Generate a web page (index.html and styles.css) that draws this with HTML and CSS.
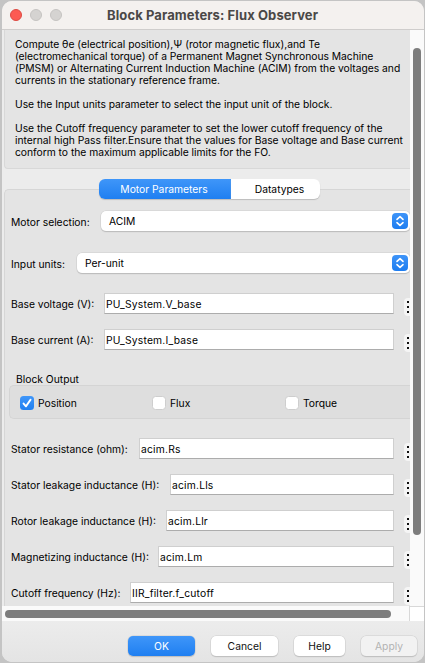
FILE: index.html
```html
<!DOCTYPE html>
<html lang="en">
<head>
<meta charset="utf-8">
<title>Block Parameters: Flux Observer</title>
<link rel="stylesheet" href="styles.css">
</head>
<body>
<main class="window">
  <header class="titlebar">
    <span class="light light-close"></span><span class="light"></span><span class="light"></span>
    <h1>Block Parameters: Flux Observer</h1>
  </header>
  <div class="viewport">
    <div class="content">
      <section class="description">
        <p><span>Compute θe (electrical position),Ψ (rotor magnetic flux),and Te</span><span>(electromechanical torque) of a Permanent Magnet Synchronous Machine</span><span>(PMSM) or Alternating Current Induction Machine (ACIM) from the voltages and</span><span>currents in the stationary reference frame.</span></p>
        <p><span>Use the Input units parameter to select the input unit of the block.</span></p>
        <p><span>Use the Cutoff frequency parameter to set the lower cutoff frequency of the</span><span>internal high Pass filter.Ensure that the values for Base voltage and Base current</span><span>conform to the maximum applicable limits for the FO.</span></p>
      </section>
      <nav class="tabs"><span class="tab tab-active">Motor Parameters</span><span class="tab tab-last">Datatypes</span></nav>
      <section class="panel">
        <div class="row row-select"><label class="w-motor">Motor selection:</label><div class="select">ACIM<svg viewBox="0 0 16 16"><path d="M5 6.4 8 3.6l3 2.8M5 9.6l3 2.8 3-2.8"/></svg></div></div>
        <div class="row row-select"><label class="w-units">Input units:</label><div class="select">Per-unit<svg viewBox="0 0 16 16"><path d="M5 6.4 8 3.6l3 2.8M5 9.6l3 2.8 3-2.8"/></svg></div></div>
        <div class="row"><label class="w-base">Base voltage (V):</label><div class="field">PU_System.V_base</div><div class="more"><i></i><i></i><i></i></div></div>
        <div class="row"><label class="w-base">Base current (A):</label><div class="field">PU_System.I_base</div><div class="more"><i></i><i></i><i></i></div></div>
        <h2>Block Output</h2>
        <div class="group">
          <div class="check"><svg class="box box-on" viewBox="0 0 14 14"><path d="M3.6 7.6 6 10.3 10.5 3.7"/></svg>Position</div>
          <div class="check"><span class="box"></span>Flux</div>
          <div class="check"><span class="box"></span>Torque</div>
        </div>
        <div class="row"><label class="w-rs">Stator resistance (ohm):</label><div class="field">acim.Rs</div><div class="more"><i></i><i></i><i></i></div></div>
        <div class="row"><label class="w-lls">Stator leakage inductance (H):</label><div class="field">acim.Lls</div><div class="more"><i></i><i></i><i></i></div></div>
        <div class="row"><label class="w-llr">Rotor leakage inductance (H):</label><div class="field">acim.Llr</div><div class="more"><i></i><i></i><i></i></div></div>
        <div class="row"><label class="w-lm">Magnetizing inductance (H):</label><div class="field">acim.Lm</div><div class="more"><i></i><i></i><i></i></div></div>
        <div class="row"><label class="w-cut">Cutoff frequency (Hz):</label><div class="field">IIR_filter.f_cutoff</div><div class="more"><i></i><i></i><i></i></div></div>
      </section>
    </div>
    <div class="vbar"><span></span></div>
    <div class="hbar"><span></span></div>
    <div class="corner"></div>
  </div>
  <footer class="actions">
    <button class="ok">OK</button><button class="cancel">Cancel</button><button class="help">Help</button><button class="apply" disabled>Apply</button>
  </footer>
</main>
</body>
</html>
```
FILE: styles.css
```css
* { box-sizing: border-box; }
html, body { height: 100%; }
body {
  margin: 0;
  padding: 1px 1px 1px 2px;
  overflow: hidden;
  background: #c4c4c4;
  font: 10.3px/12px Inter, "Liberation Sans", sans-serif;
  color: #000;
}
.window {
  display: flex;
  flex-direction: column;
  height: 661px;
  border-radius: 10px;
  background: #ececec;
  overflow: hidden;
}
.titlebar {
  display: flex;
  align-items: center;
  gap: 8px;
  flex: none;
  height: 29px;
  padding-left: 8px;
  border-bottom: 1px solid #cfcdcc;
  background: #f4f1ef;
}
.light { width: 12px; height: 12px; border: 1px solid #c5c3c1; border-radius: 50%; background: #d5d3d1; }
.light-close { border-color: #dc4a43; background: #fc5b53; }
h1 { margin: 0 0 0 37px; font-size: 13px; line-height: 16px; font-weight: 700; letter-spacing: 0.1px; color: #4a4847; white-space: nowrap; }
.viewport {
  display: grid;
  grid-template: 576px 15px / 408px 1fr;
  flex: none;
}
.content { padding-left: 2px; overflow: hidden; }
.description {
  height: 139px;
  padding: 8px 0 0 10px;
  border: solid #d8d8d8;
  border-width: 0 0 1px 1px;
  border-radius: 0 0 0 4px;
  background: #e4e4e4;
  letter-spacing: -0.02px;
}
.description p { margin: 0 0 12px; white-space: nowrap; }
.description span { display: block; }
.tabs { display: flex; position: relative; height: 21px; margin: 10px 0 0 95px; }
.tab {
  width: 89px;
  height: 20px;
  border-radius: 0 6px 6px 0;
  background: #fff;
  box-shadow: 0 1px 1px #bcbcbc;
  line-height: 21px;
  text-align: center;
}
.tab-active { width: 132px; padding-right: 3px; padding-left: 1px; border-radius: 6px 0 0 6px; background: linear-gradient(#3f96f9, #1f7ff1); color: #fff; }
.tab-last { padding-left: 8px; }
.panel {
  height: 420px;
  margin-top: -11px;
  padding: 21px 0 0 6px;
  border: solid #d6d6d6;
  border-width: 1px 0 0 1px;
  border-radius: 5px 0 0 0;
  background: #e4e4e4;
}
.row { display: flex; align-items: flex-start; height: 36px; white-space: nowrap; }
.row label { flex: none; padding-top: 5px; }
.row-select { height: 42px; }
.row-select + .row:not(.row-select) { margin-top: -2px; }
.select {
  display: flex;
  flex: 1;
  justify-content: space-between;
  align-items: center;
  height: 20px;
  padding: 0 2px 0 8px;
  border-radius: 5px;
  background: #fff;
  box-shadow: 0 0 0 .5px #cdcdcd, 0 1px 1px #a9a9a9;
}
.select svg { width: 16px; height: 16px; border-radius: 4px; background: linear-gradient(#3e94f8, #1d7df0); fill: none; stroke: #fff; stroke-width: 1.6; stroke-linecap: round; stroke-linejoin: round; }
.field {
  flex: 1;
  height: 21px;
  padding-left: 1px;
  border: 1px solid #cfcfcf;
  border-bottom-color: #acacac;
  background: #fff;
  line-height: 20px;
  letter-spacing: 0.2px;
}
.more { display: flex; flex-direction: column; gap: 3px; width: 6px; height: 18px; margin: 5px 0 0 10px; padding: 3px 0 0 3px; border-radius: 4px 0 0 4px; background: #f5f5f5; }
.more i { width: 2px; height: 2px; background: #111; }
.w-motor { width: 90px; }
.w-units { width: 66px; }
.w-base { width: 93px; }
.w-rs { width: 128px; }
.w-lls { width: 159px; }
.w-llr { width: 155px; }
.w-lm { width: 147px; }
.w-cut { width: 119px; }
h2 { margin: 8px 0 0 5px; font-size: inherit; line-height: 12px; font-weight: 400; }
.group {
  display: grid;
  grid-template-columns: 132px 133px 1fr;
  align-items: center;
  height: 34px;
  margin: 0 0 19px -2px;
  padding: 2px 0 0 10px;
  border: 1px solid #d4d4d4;
  border-right: 0;
  border-radius: 5px 0 0 5px;
  background: #dedede;
}
.check { display: flex; align-items: center; gap: 4px; }
.box { width: 14px; height: 14px; border: 1px solid #cecece; border-radius: 3.5px; background: #fff; }
.box-on { border: 0; background: linear-gradient(#3f96f9, #1f7ff1); fill: none; stroke: #fff; stroke-width: 2; stroke-linecap: round; stroke-linejoin: round; }
.vbar { padding: 18px 3px 0 2px; background: #fafafa; }
.vbar span { display: block; width: 8px; height: 487px; margin-left: 1px; border-radius: 4px; background: #7d7d7d; }
.hbar { padding: 4px 0 0 3px; border-right: 1px solid #d8d8d8; background: #fafafa; }
.hbar span { display: block; width: 386px; height: 8px; border-radius: 4px; background: #7d7d7d; }
.corner { border-top: 1px solid #d8d8d8; background: #fff; }
.actions { display: flex; align-items: flex-start; flex: 1; padding: 9px 0 0 126px; background: linear-gradient(#ececec, #e4e4e4); }
.actions button {
  height: 20px;
  margin: 6px 0 0;
  padding: 0;
  border: 0;
  border-radius: 5px;
  background: #fff;
  box-shadow: 0 0 0 .5px #cdcdcd, 0 1px 1px #b0b0b0;
  font: inherit;
  color: #111;
}
.actions .ok { width: 67px; margin-right: 16px; background: linear-gradient(#3f96f9, #1f7ff1); color: #fff; }
.actions .cancel { width: 67px; margin-right: 16px; }
.actions .help { width: 51px; margin-right: 16px; }
.actions .apply { width: 56px; background: #f2f2f2; color: #b2b2b2; }
```
